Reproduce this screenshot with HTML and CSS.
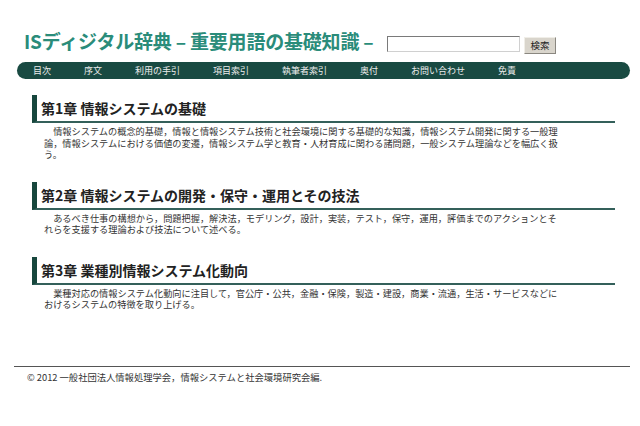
FILE: index.html
```html
<!DOCTYPE html>
<html lang="ja">
<head>
<meta charset="utf-8">
<title>ISディジタル辞典</title>
<link rel="stylesheet" href="styles.css">
</head>
<body>
<header class="site-header">
  <div class="title-row">
    <h1 class="site-title">ISディジタル辞典 – 重要用語の基礎知識 –</h1>
    <form class="search">
      <input type="text" class="search-input">
      <button type="button" class="search-btn">検索</button>
    </form>
  </div>
  <nav class="global-nav">
    <ul class="nav-list">
      <li>目次</li>
      <li>序文</li>
      <li>利用の手引</li>
      <li>項目索引</li>
      <li>執筆者索引</li>
      <li>奥付</li>
      <li>お問い合わせ</li>
      <li>免責</li>
    </ul>
  </nav>
</header>
<main class="content">
  <section class="chapter">
    <h2 class="chapter-title">第1章 情報システムの基礎</h2>
    <p class="chapter-desc">情報システムの概念的基礎，情報と情報システム技術と社会環境に関する基礎的な知識，情報システム開発に関する一般理論，情報システムにおける価値の変遷，情報システム学と教育・人材育成に関わる諸問題，一般システム理論などを幅広く扱う。</p>
  </section>
  <section class="chapter">
    <h2 class="chapter-title">第2章 情報システムの開発・保守・運用とその技法</h2>
    <p class="chapter-desc">あるべき仕事の構想から，問題把握，解決法，モデリング，設計，実装，テスト，保守，運用，評価までのアクションとそれらを支援する理論および技法について述べる。</p>
  </section>
  <section class="chapter">
    <h2 class="chapter-title">第3章 業種別情報システム化動向</h2>
    <p class="chapter-desc">業種対応の情報システム化動向に注目して，官公庁・公共，金融・保険，製造・建設，商業・流通，生活・サービスなどにおけるシステムの特徴を取り上げる。</p>
  </section>
</main>
<footer class="site-footer">
  <p class="copyright">© 2012 一般社団法人情報処理学会，情報システムと社会環境研究会編.</p>
</footer>
</body>
</html>
```

FILE: styles.css
```css
html, body {
  margin: 0;
  padding: 0;
  background: #ffffff;
}

body {
  font-family: "Noto Sans CJK JP", "Noto Sans", sans-serif;
  color: #333333;
}

.site-header {
  padding-top: 30px;
}

.title-row {
  display: flex;
  align-items: flex-start;
  padding-left: 24px;
}

.site-title {
  flex: 0 0 363px;
  margin: 0;
  font-size: 19px;
  line-height: 22px;
  font-weight: bold;
  color: #2a8c7a;
  white-space: nowrap;
  letter-spacing: -0.2px;
}

.search {
  display: flex;
  align-items: flex-start;
  gap: 4px;
  margin: 6px 0 0;
}

.search-input {
  box-sizing: border-box;
  width: 133px;
  height: 16px;
  margin: 0;
  padding: 0 2px;
  border: 1px solid;
  border-color: #7a7a7a #d0d0d0 #d0d0d0 #7a7a7a;
  background: #ffffff;
}

.search-btn {
  box-sizing: border-box;
  width: 32px;
  height: 17px;
  margin: 1px 0 0;
  padding: 0;
  border: 1px solid;
  border-color: #f0eee8 #8a8780 #8a8780 #f0eee8;
  background: #d9d5cc;
  font-family: "Noto Sans CJK JP", sans-serif;
  font-size: 9.5px;
  line-height: 15px;
  color: #222222;
}

.global-nav {
  margin: 8px 10px 0 17px;
  height: 17px;
  border-radius: 9px;
  background: #194a42;
}

.nav-list {
  display: flex;
  gap: 33px;
  margin: 0;
  padding: 0 0 0 16px;
  list-style: none;
}

.nav-list li {
  font-size: 9px;
  line-height: 17px;
  color: #ececec;
  white-space: nowrap;
}

.content {
  display: flow-root;
  margin: 16px 25px 0 32px;
}

.chapter {
  margin-bottom: 21px;
}

.chapter-title {
  margin: 0;
  padding: 0 0 0 4px;
  border-left: 5px solid #17473d;
  border-bottom: 2px solid #34605a;
  font-size: 14px;
  line-height: 26px;
  font-weight: bold;
  color: #222222;
}

.chapter-desc {
  margin: 3px 0 0 12px;
  width: 56.5em;
  font-size: 9.2px;
  line-height: 11.5px;
  text-indent: 1em;
  color: #333333;
}

.site-footer {
  margin: 34px 10px 0 14px;
  border-top: 1px solid #555555;
}

.copyright {
  margin: 0;
  padding: 4px 0 0 13px;
  font-size: 9.3px;
  line-height: 12px;
  color: #333333;
}
```
